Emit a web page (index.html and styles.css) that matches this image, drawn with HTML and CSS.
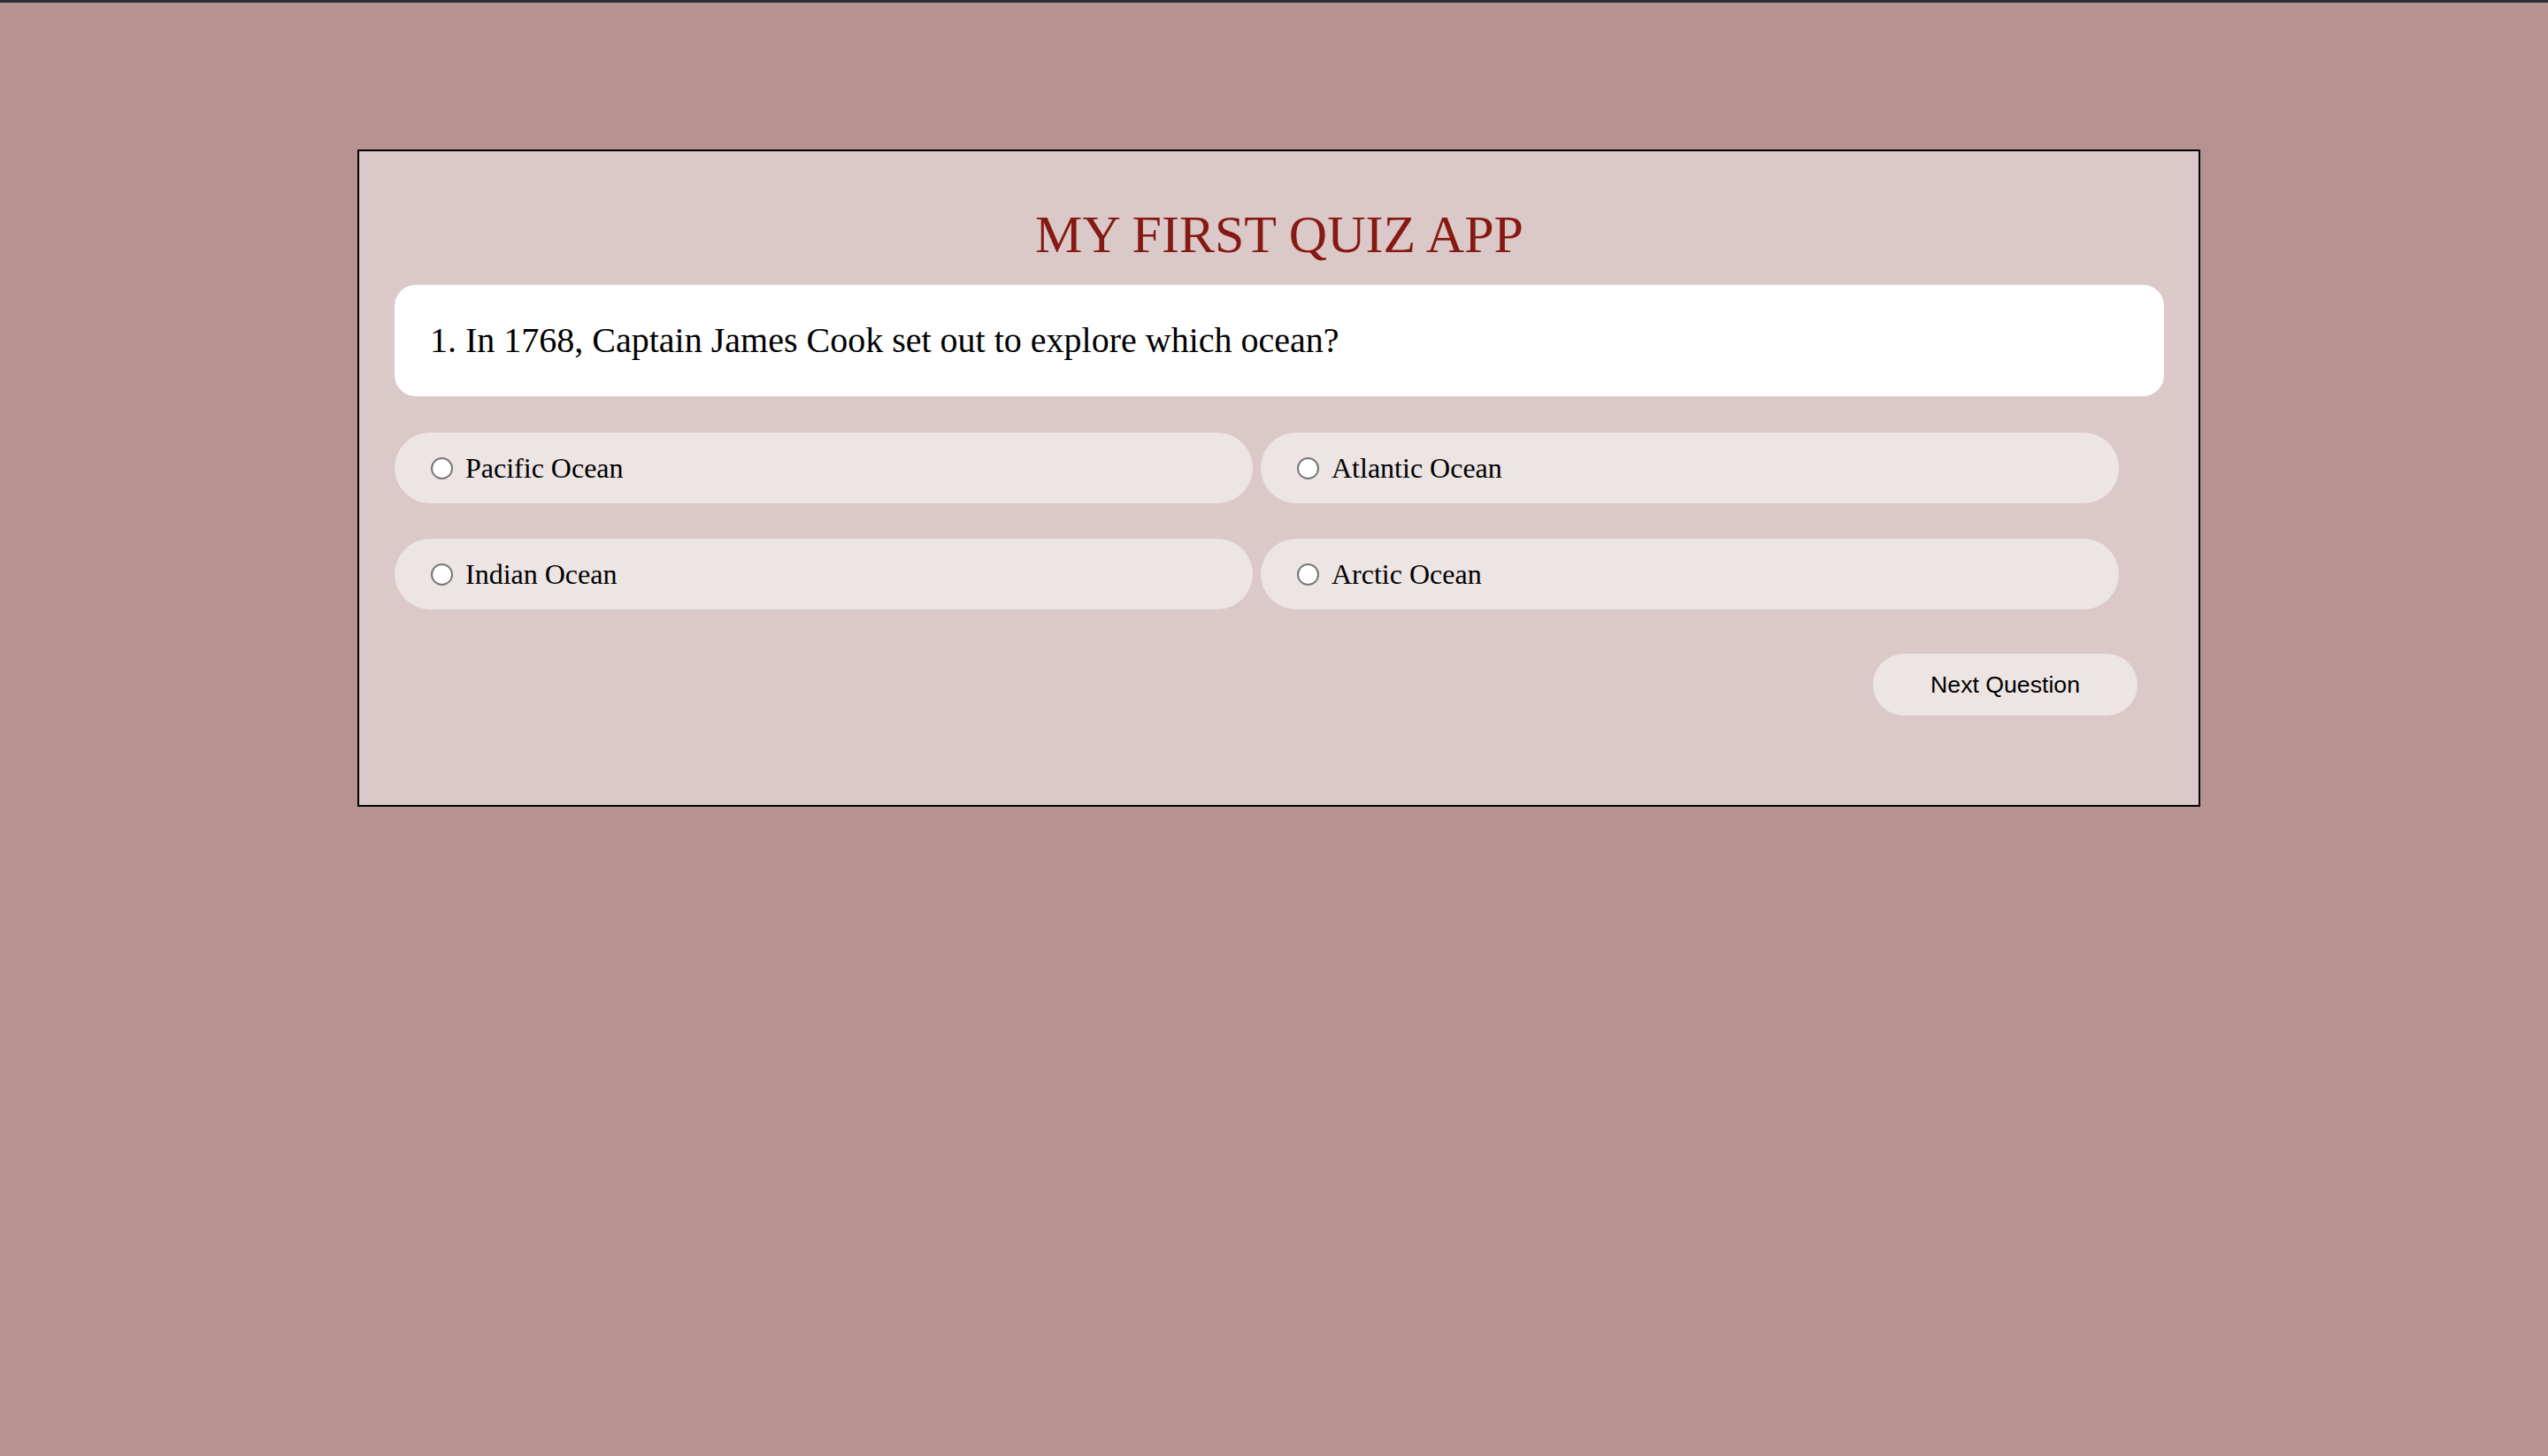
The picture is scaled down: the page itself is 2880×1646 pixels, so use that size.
FILE: index.html
```html
<!DOCTYPE html>
<html lang="en">
<head>
<meta charset="utf-8">
<title>My First Quiz App</title>
<link rel="stylesheet" href="styles.css">
</head>
<body>
<div class="topbar"></div>
<main class="quiz">
  <h1 class="quiz-title">MY FIRST QUIZ APP</h1>
  <div class="question">1. In 1768, Captain James Cook set out to explore which ocean?</div>
  <div class="options">
    <label class="option"><input type="radio" name="answer" class="radio"><span>Pacific Ocean</span></label>
    <label class="option"><input type="radio" name="answer" class="radio"><span>Atlantic Ocean</span></label>
    <label class="option"><input type="radio" name="answer" class="radio"><span>Indian Ocean</span></label>
    <label class="option"><input type="radio" name="answer" class="radio"><span>Arctic Ocean</span></label>
  </div>
  <div class="actions">
    <button class="next-btn" type="button">Next Question</button>
  </div>
</main>
</body>
</html>
```
FILE: styles.css
```css
html, body {
  margin: 0;
  padding: 0;
}
body {
  background: #b69391;
  min-height: 1646px;
  font-family: "Liberation Serif", "Times New Roman", serif;
}
.topbar {
  height: 3px;
  background: #2e2d31;
}
.quiz {
  box-sizing: border-box;
  width: 2083px;
  margin: 166px 0 0 404px;
  background: #dbc8c9;
  border: 2px solid #000;
  padding: 60px 39px 101px 40px;
}
.quiz-title {
  margin: 0 0 22px;
  text-align: center;
  font-weight: normal;
  font-size: 60px;
  line-height: 69px;
  color: #861911;
}
.question {
  background: #fff;
  border-radius: 24px;
  padding: 40px;
  font-size: 40px;
  line-height: 46px;
  color: #000;
}
.options {
  display: flex;
  flex-wrap: wrap;
  column-gap: 9px;
  row-gap: 40px;
  margin-top: 41px;
}
.option {
  box-sizing: border-box;
  width: 970px;
  height: 80px;
  display: flex;
  align-items: center;
  padding-left: 41px;
  background: #ede4e4;
  border-radius: 40px;
  font-size: 32px;
  line-height: 37px;
  color: #000;
}
.radio {
  appearance: none;
  -webkit-appearance: none;
  box-sizing: border-box;
  width: 25px;
  height: 25px;
  margin: 0 14px 0 0;
  border: 2px solid #767676;
  border-radius: 50%;
  background: #fff;
  flex: none;
}
.actions {
  display: flex;
  justify-content: flex-end;
  margin-top: 50px;
  padding-right: 30px;
}
.next-btn {
  height: 70px;
  padding: 0 65px;
  border: none;
  border-radius: 35px;
  background: #ede4e4;
  font-family: "Liberation Sans", Arial, sans-serif;
  font-size: 26.67px;
  color: #000;
}
```
